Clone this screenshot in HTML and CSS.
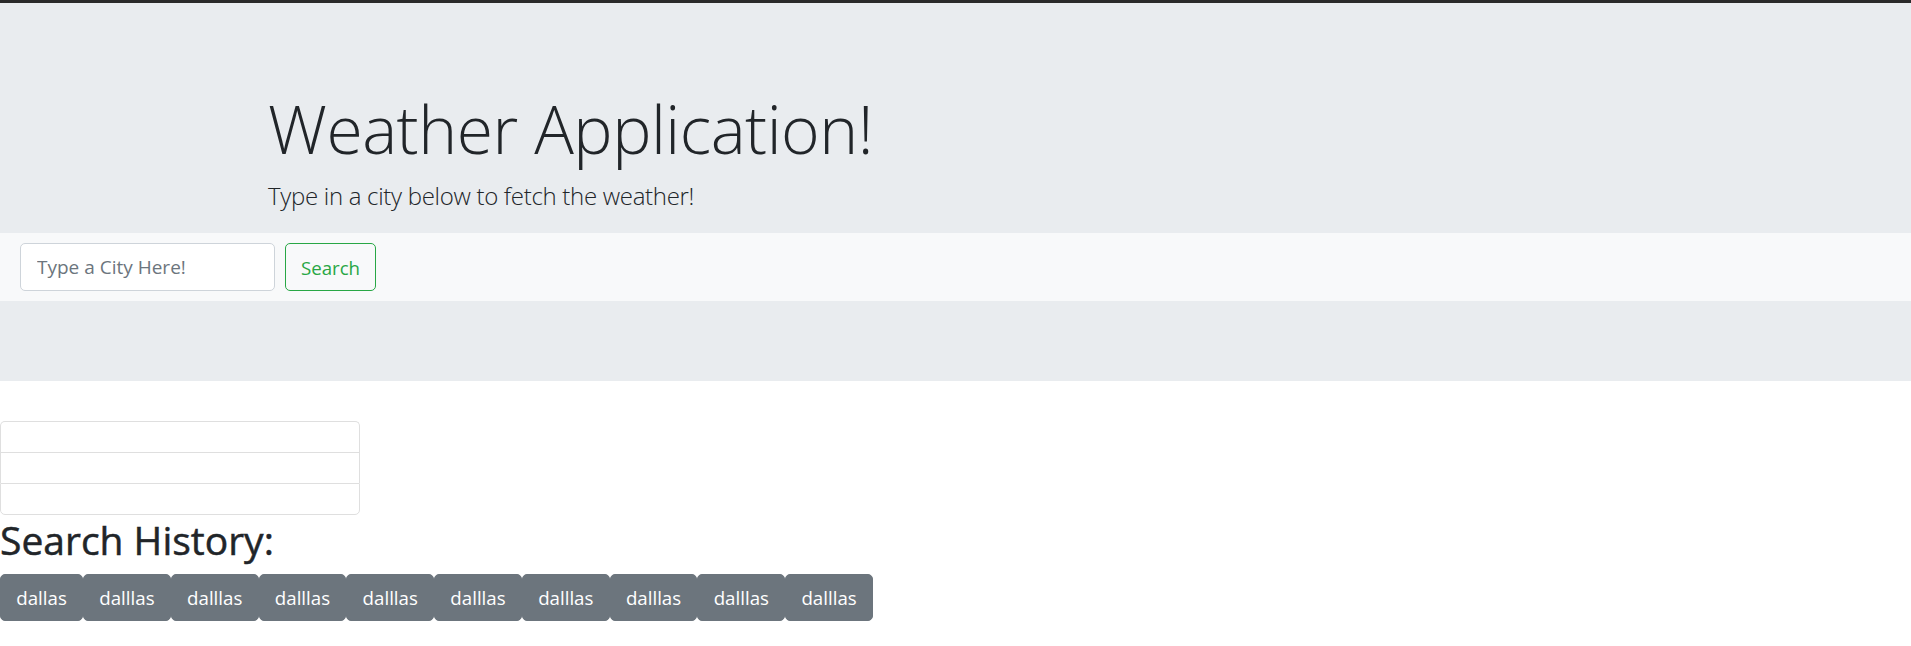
FILE: index.html
```html
<!DOCTYPE html>
<html>
<head>
<meta charset="utf-8">
<link rel="stylesheet" href="styles.css">
</head>
<body>
<div class="topbar"></div>
<header class="jumbotron">
  <div class="container">
    <h1 class="display">Weather Application!</h1>
    <p class="lead">Type in a city below to fetch the weather!</p>
  </div>
  <nav class="searchbar">
    <input class="city-input" type="text" placeholder="Type a City Here!">
    <button class="btn-search">Search</button>
  </nav>
</header>
<ul class="list-group">
  <li class="list-item"></li>
  <li class="list-item"></li>
  <li class="list-item"></li>
</ul>
<h2 class="history-title">Search History:</h2>
<div class="history">
  <button class="btn-city">dallas</button>
  <button class="btn-city">dalllas</button>
  <button class="btn-city">dalllas</button>
  <button class="btn-city">dalllas</button>
  <button class="btn-city">dalllas</button>
  <button class="btn-city">dalllas</button>
  <button class="btn-city">dalllas</button>
  <button class="btn-city">dalllas</button>
  <button class="btn-city">dalllas</button>
  <button class="btn-city">dalllas</button>
</div>
</body>
</html>
```
FILE: styles.css
```css
* { box-sizing: border-box; }
body { margin: 0; font-family: "Open Sans", sans-serif; color: #212529; background: #fff; }
.topbar { height: 3px; background: #2a2a2a; }
.jumbotron { background: #e9ecef; padding-top: 80px; padding-bottom: 80px; margin-bottom: 40px; }
.container { padding-left: 268px; }
.display { margin: 3px 0 6px; font-size: 66px; font-weight: 300; letter-spacing: -0.5px; line-height: 84px; }
.lead { margin: 0 0 17px; font-size: 24px; font-weight: 300; letter-spacing: -0.3px; line-height: 40px; }
.searchbar { background: #f8f9fa; display: flex; align-items: center; gap: 10px; height: 68px; padding: 0 20px; }
.city-input { width: 255px; height: 48px; border: 1px solid #ced4da; border-radius: 5px; padding: 0 16px; background: #fff; color: #495057; font: 19px "Open Sans", sans-serif; outline: none; }
.city-input::placeholder { color: #6c757d; opacity: 1; }
.btn-search { height: 48px; width: 91px; padding: 0; border: 1px solid #28a745; color: #28a745; background: transparent; border-radius: 5px; font: 18.7px "Open Sans", sans-serif; }
.list-group { list-style: none; margin: 0; padding: 0; width: 360px; }
.list-item { height: 31px; border: 1px solid #dfdfdf; border-bottom: 0; }
.list-item:first-child { border-radius: 5px 5px 0 0; }
.list-item:last-child { height: 32px; border-bottom: 1px solid #dfdfdf; border-radius: 0 0 5px 5px; }
.history-title { margin: 1px 0 10px; font-size: 39px; font-weight: 500; line-height: 48px; -webkit-text-stroke: 0.5px #212529; }
.history { display: flex; }
.btn-city { height: 47px; background: #6c757d; color: #fff; border: 1px solid #6c757d; border-radius: 5px; padding: 0 15.25px; font: 18.7px "Open Sans", sans-serif; }
```
